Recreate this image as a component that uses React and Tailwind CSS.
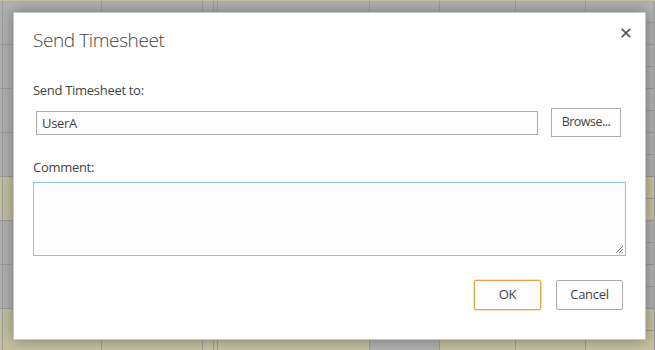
import React from "react";

// columns of the list behind the dialog (widths in px)
const cols = [3, 99, 101, 11, 4, 152, 70, 76, 70, 69];

const rows = [
  { h: 44, tan: false },
  { h: 44, tan: false },
  { h: 44, tan: false },
  { h: 44, tan: false },
  { h: 44, tan: true },
  { h: 44, tan: false },
  { h: 44, tan: false },
  { h: 44, tan: true, grayCol: 6 },
];

const GridRow = ({ row }) => (
  <div className="flex border-b border-[#9c9c9c]" style={{ height: row.h }}>
    {cols.map((w, i) => {
      const gray = !row.tan || row.grayCol === i;
      const last = i === cols.length - 1;
      return (
        <div
          key={i}
          className={`shrink-0 border-r border-[#9c9c9c] ${gray ? "bg-[#b1b1b1]" : "bg-[#c6c0a0]"} ${last ? "flex flex-col" : ""}`}
          style={{ width: w }}
        >
          {last && <div className="h-1/2 border-b border-[#9c9c9c]"></div>}
        </div>
      );
    })}
  </div>
);

const Button = ({ children, primary }) => (
  <button
    className={`h-[30px] w-[67px] bg-[#fdfdfd] text-[13px] tracking-[-0.3px] text-[#444] rounded-[2px] border ${
      primary ? "border-[#e3a53f] shadow-[0_0_0_0.5px_#f0c880]" : "border-[#ababab]"
    }`}
  >
    {children}
  </button>
);

export default function App() {
  return (
    <div className="relative w-[655px] h-[350px] overflow-hidden font-['Open_Sans',sans-serif] bg-[#b1b1b1]">
      {/* list behind the modal */}
      <div className="flex flex-col">
        <div className="h-[1px] bg-[#c6c0a0]"></div>
        {rows.map((r, i) => (
          <GridRow key={i} row={r} />
        ))}
      </div>

      {/* dialog */}
      <div className="absolute left-[13px] top-[12px] w-[633px] h-[328px] bg-white border border-[#c6c6c6] shadow-[0_0_14px_rgba(0,0,0,0.35)] flex flex-col pl-[19px] pr-[22px] pt-[13px]">
        <div className="flex items-start justify-between">
          <div className="h-[28px] leading-[28px] text-[19px] tracking-[-0.4px] font-light text-[#444]">Send Timesheet</div>
          <button className="mt-[2px] mr-[-8px] text-[#555]">
            <svg width="10" height="10" viewBox="0 0 10 10">
              <path d="M0.8 0.8L9.2 9.2M9.2 0.8L0.8 9.2" stroke="currentColor" strokeWidth="1.7" />
            </svg>
          </button>
        </div>

        <div className="mt-[27px] h-[18px] leading-[18px] text-[13px] tracking-[-0.3px] text-[#444]">Send Timesheet to:</div>

        <div className="mt-[9px] flex items-center h-[29px]">
          <div className="ml-[3px] w-[502px] h-[24px] border border-[#ababab] bg-[#fdfdfd] px-[5px] text-[13px] leading-[22px] tracking-[-0.3px] text-[#444]">
            UserA
          </div>
          <button className="ml-[13px] w-[70px] h-[29px] border border-[#ababab] bg-[#fdfdfd] text-[12.5px] tracking-[-0.5px] text-[#444]">
            Browse...
          </button>
        </div>

        <div className="mt-[21px] h-[18px] leading-[18px] text-[13px] tracking-[-0.3px] text-[#444]">Comment:</div>

        <div className="relative mt-[6px] w-[593px] h-[74px] border border-[#92c0e0] bg-[#fdfdfd]">
          <svg className="absolute right-[1px] bottom-[1px]" width="9" height="9" viewBox="0 0 9 9">
            <path d="M8 1L1 8M8 4L4 8M8 7L7 8" stroke="#777" strokeWidth="1" />
          </svg>
        </div>

        <div className="mt-[24px] flex justify-end gap-[15px]">
          <Button primary>OK</Button>
          <Button>Cancel</Button>
        </div>
      </div>
    </div>
  );
}
